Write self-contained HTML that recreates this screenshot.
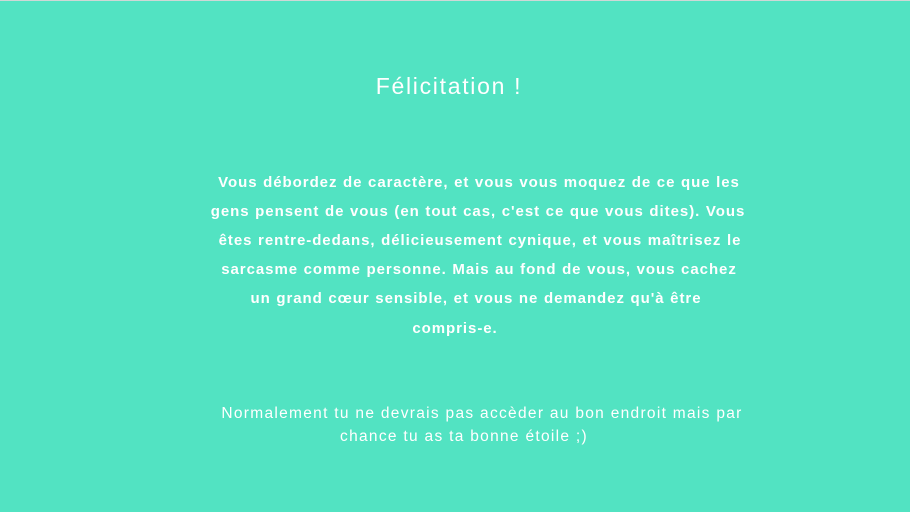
<!DOCTYPE html>
<html><head><meta charset="utf-8"><style>
html,body{margin:0;padding:0}
body{width:910px;height:512px;background:#52e3c2;border-top:1px solid #cfd8d6;box-sizing:border-box;position:relative;overflow:hidden;font-family:"Liberation Sans",sans-serif;color:#fff}
.l{position:absolute;white-space:nowrap;text-align:center;transform:translateX(-50%)}
.p{font-size:15px;font-weight:bold;letter-spacing:0.95px;word-spacing:0.5px}
.b{font-size:15.5px;letter-spacing:1.3px}
</style></head><body>
<div class="l" style="left:449px;top:72px;font-size:23px;letter-spacing:1.7px">Félicitation !</div>
<div class="l p" style="left:479px;top:173px">Vous débordez de caractère, et vous vous moquez de ce que les</div>
<div class="l p" style="left:478px;top:202px">gens pensent de vous (en tout cas, c'est ce que vous dites). Vous</div>
<div class="l p" style="left:480px;top:231px">êtes rentre-dedans, délicieusement cynique, et vous maîtrisez le</div>
<div class="l p" style="left:479px;top:260px">sarcasme comme personne. Mais au fond de vous, vous cachez</div>
<div class="l p" style="left:476px;top:289px">un grand cœur sensible, et vous ne demandez qu'à être</div>
<div class="l p" style="left:455px;top:319px">compris-e.</div>
<div class="l b" style="left:482px;top:404px">Normalement tu ne devrais pas accèder au bon endroit mais par</div>
<div class="l b" style="left:464px;top:427px">chance tu as ta bonne étoile ;)</div>
</body></html>
